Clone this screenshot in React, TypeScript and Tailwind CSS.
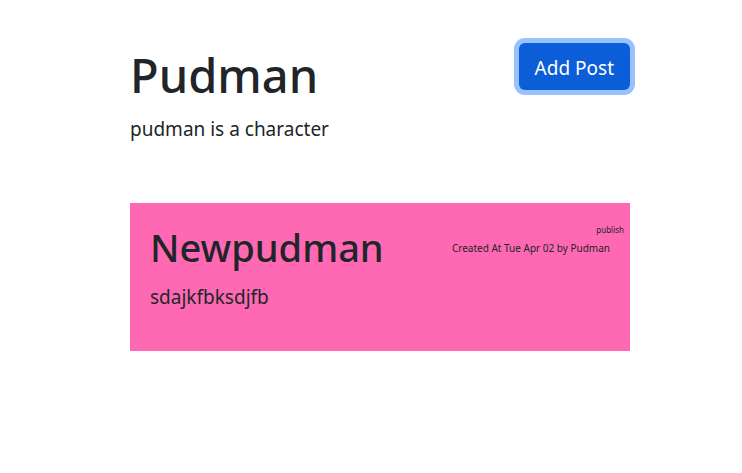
export default function App() {
  return (
    <div className="pl-[18px]">
      <main className="mx-auto w-full max-w-[500px] pt-[43px] font-['Noto_Sans','Open_Sans',sans-serif] text-[19px] leading-[31px] text-[#212529]">
        <header className="flex items-start justify-between">
          <div>
            <h1 className="mt-[3px] mb-[10px] text-[47px] leading-[58px] font-medium">Pudman</h1>
            <p>pudman is a character</p>
          </div>
          <button type="button" className="rounded-md bg-[#0b5ed7] px-4 pt-[10px] pb-[6px] text-white ring-5 ring-[#98c1fe]">
            Add Post
          </button>
        </header>
        <article className="mt-[58px] flex items-start justify-between bg-[#ff69b4] pt-5 pb-[38px] pl-5">
          <div>
            <h2 className="mb-[10px] text-[38px] leading-[49px] font-medium">Newpudman</h2>
            <p>sdajkfbksdjfb</p>
          </div>
          <div className="-mt-0.5 flex flex-col items-end pr-[6px] leading-[18px]">
            <span className="text-[8px]">publish</span>
            <span className="pr-[14px] text-[10px]">Created At Tue Apr 02 by Pudman</span>
          </div>
        </article>
      </main>
    </div>
  );
}
